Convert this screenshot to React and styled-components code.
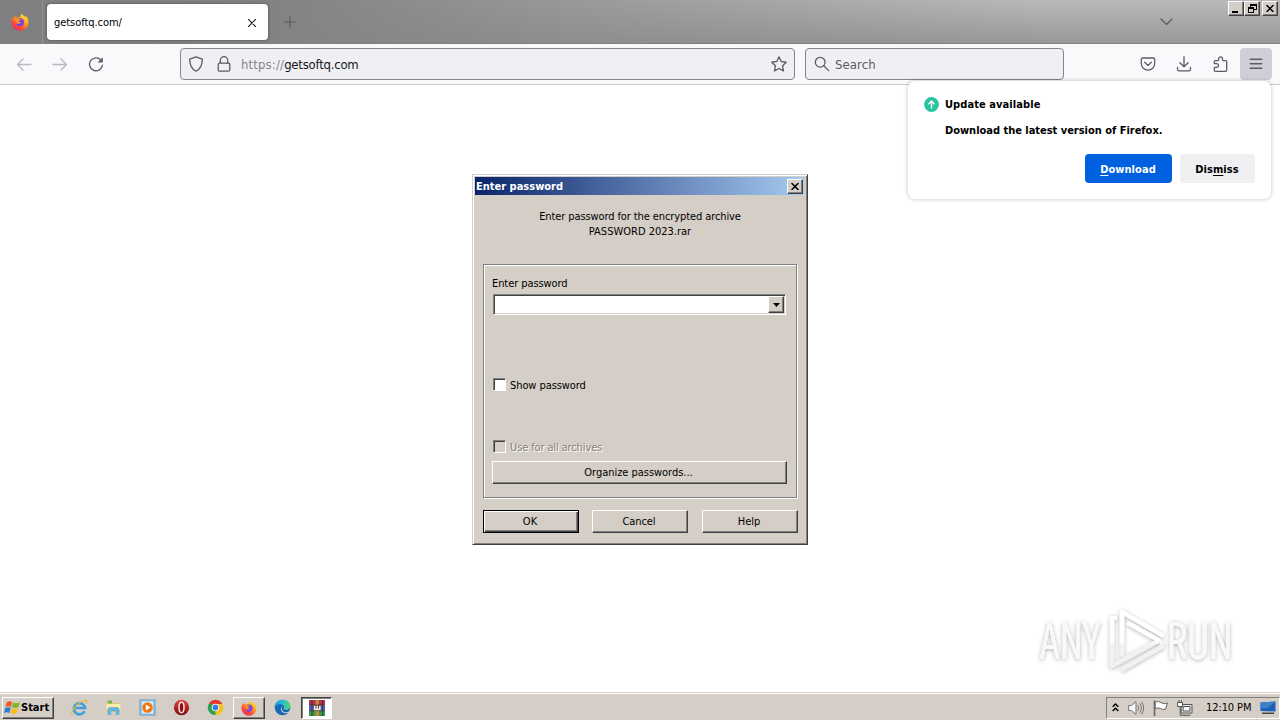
import React from "react";
import styled, { createGlobalStyle, css } from "styled-components";

const Global = createGlobalStyle`
  * { box-sizing: border-box; }
  html, body { margin: 0; padding: 0; background: #fff; overflow: hidden; }
  body { font-family: "DejaVu Sans Condensed", "DejaVu Sans", sans-serif; font-stretch: condensed; font-size: 11px; color: #000; }
`;

const Screen = styled.div`
  position: relative;
  width: 1280px;
  height: 720px;
  display: flex;
  flex-direction: column;
  overflow: hidden;
`;

const Text = styled.span`
  font-size: ${(p) => p.$size || 11}px;
  font-weight: ${(p) => (p.$bold ? 700 : 400)};
  letter-spacing: ${(p) => p.$track || 0}px;
  color: ${(p) => p.$color || "#000"};
  text-shadow: ${(p) => (p.$etched ? "1px 1px 0 #fff" : "none")};
  line-height: 15px;
  white-space: nowrap;
`;

/* ---------- browser ---------- */
const TabStrip = styled.header`
  height: 44px;
  flex: none;
  display: flex;
  align-items: flex-start;
  background: linear-gradient(90deg, #7f7f7f 0%, #838383 22%, rgba(136, 136, 136, 0.65) 45%, rgba(150, 150, 150, 0) 82%),
    linear-gradient(180deg, #bababa, #989898);
  border-bottom: 1px solid #808080;
`;
const ViewButton = styled.div`
  width: 43px;
  height: 43px;
  display: flex;
  align-items: center;
  padding-left: 11px;
  border-right: 1px solid #929292;
`;
const Tab = styled.div`
  width: 221px;
  height: 36px;
  margin: 4px 0 0 4px;
  padding: 1px 12px 0 7px;
  display: flex;
  align-items: center;
  justify-content: space-between;
  background: #fff;
  border-radius: 4px;
  box-shadow: 0 0 3px rgba(0, 0, 0, 0.45);
`;
const StripIcon = styled.div`
  margin: ${(p) => p.$m};
  display: flex;
`;
const WindowButtons = styled.div`
  display: flex;
  margin: 1px 2px 0 auto;
`;
const raised = css`
  border: 1px solid;
  border-color: #fff #404040 #404040 #fff;
  box-shadow: inset -1px -1px 0 #808080;
  background: #d5cec7;
`;
const SmallButton = styled.div`
  ${raised}
  width: 16px;
  height: 15px;
  margin-left: ${(p) => p.$gap || 0}px;
  display: flex;
  align-items: center;
  justify-content: center;
`;
const Toolbar = styled.nav`
  height: 41px;
  flex: none;
  display: flex;
  align-items: center;
  background: #f9f9fb;
  border-bottom: 1px solid #cccccf;
`;
const ToolIcon = styled.div`
  width: ${(p) => p.$w || 32}px;
  height: 32px;
  margin-left: ${(p) => p.$gap || 0}px;
  display: flex;
  align-items: center;
  justify-content: center;
  border-radius: 4px;
  background: ${(p) => (p.$active ? "#cfcfd8" : "transparent")};
`;
const Field = styled.div`
  width: ${(p) => p.$w}px;
  height: 32px;
  margin-left: ${(p) => p.$gap}px;
  padding: ${(p) => p.$pad};
  display: flex;
  align-items: center;
  background: #f0f0f4;
  border: 1px solid #85858c;
  border-radius: 4px;
`;
const Spacer = styled.div`
  flex: 1;
`;
const Page = styled.main`
  flex: 1;
  background: #fff;
`;

/* ---------- update popup ---------- */
const Popup = styled.aside`
  position: absolute;
  left: 908px;
  top: 81px;
  width: 363px;
  height: 118px;
  padding: 16px 16px 0 16px;
  background: #fff;
  border-radius: 7px;
  box-shadow: 0 0 4px rgba(0, 0, 0, 0.25);
`;
const PopupRow = styled.div`
  display: flex;
  align-items: center;
  height: 15px;
  gap: 6px;
`;
const PopupBody = styled.div`
  display: flex;
  padding-left: 21px;
  margin-top: 11px;
`;
const PopupActions = styled.div`
  display: flex;
  justify-content: flex-end;
  gap: 8px;
  margin-top: 16px;
`;
const ActionButton = styled.div`
  width: ${(p) => p.$w}px;
  height: 29px;
  padding: 1px 1px 0 0;
  display: flex;
  align-items: center;
  justify-content: center;
  border-radius: 4px;
  background: ${(p) => (p.$primary ? "#0061e0" : "#efeff2")};
`;
const Key = styled.span`
  text-decoration: underline;
  text-underline-offset: 2px;
`;

/* ---------- dialog ---------- */
const Dialog = styled.section`
  position: absolute;
  left: 472px;
  top: 174px;
  width: 336px;
  height: 371px;
  padding: 2px 3px 0;
  background: #d5cec7;
  border: 1px solid;
  border-color: #d5cec7 #404040 #404040 #d5cec7;
  box-shadow: inset 1px 1px 0 #fff, inset -1px -1px 0 #808080;
  display: flex;
  flex-direction: column;
`;
const TitleBar = styled.div`
  height: 18px;
  margin-left: -1px;
  padding: 0 1px 0 1px;
  display: flex;
  align-items: center;
  justify-content: space-between;
  background: linear-gradient(90deg, #0a246a, #a6caf0);
`;
const Message = styled.div`
  margin-top: 14px;
  height: 55px;
  display: flex;
  flex-direction: column;
  align-items: center;
`;
const Group = styled.div`
  width: 314px;
  height: 234px;
  margin-left: 7px;
  padding: 11px 9px 0 8px;
  display: flex;
  flex-direction: column;
  border: 1px solid #808080;
  box-shadow: 1px 1px 0 #fff, inset 1px 1px 0 #fff;
`;
const Combo = styled.div`
  width: 293px;
  height: 21px;
  margin: 3px 0 0 1px;
  padding: 1px;
  display: flex;
  justify-content: flex-end;
  background: #fff;
  border: 1px solid;
  border-color: #808080 #fff #fff #808080;
  box-shadow: inset 1px 1px 0 #404040, inset -1px -1px 0 #d5cec7;
`;
const ComboArrow = styled.div`
  ${raised}
  width: 16px;
  height: 17px;
  display: flex;
  align-items: center;
  justify-content: center;
`;
const CheckRow = styled.div`
  display: flex;
  align-items: center;
  height: 15px;
  margin-top: ${(p) => p.$top}px;
  gap: 4px;
`;
const Box = styled.div`
  width: 13px;
  height: 13px;
  margin: 0 0 2px 1px;
  background: ${(p) => (p.$off ? "#d5cec7" : "#fff")};
  border: 1px solid;
  border-color: #808080 #fff #fff #808080;
  box-shadow: inset 1px 1px 0 #404040;
`;
const Button = styled.div`
  ${raised}
  width: ${(p) => p.$w}px;
  height: 23px;
  margin-top: ${(p) => p.$top || 0}px;
  padding-right: 2px;
  display: flex;
  align-items: center;
  justify-content: center;
  flex: none;
  ${(p) =>
    p.$default &&
    css`
      border-color: #000;
      box-shadow: inset 1px 1px 0 #fff, inset -1px -1px 0 #404040, inset -2px -2px 0 #808080;
    `}
`;
const ButtonRow = styled.div`
  display: grid;
  grid-template-columns: 109px 110px 96px;
  margin: 12px 0 0 7px;
`;
const Watermark = styled.svg`
  position: absolute;
  left: 1028px;
  top: 602px;
`;

/* ---------- taskbar ---------- */
const TaskBar = styled.footer`
  height: 28px;
  flex: none;
  display: flex;
  align-items: center;
  padding: 3px 0 1px 2px;
  background: #d5cec7;
  border-top: 1px solid #d5cec7;
  box-shadow: inset 0 1px 0 #fff;
`;
const StartButton = styled.div`
  ${raised}
  width: 52px;
  height: 22px;
  padding-left: 1px;
  display: flex;
  align-items: center;
  gap: 0;
`;
const Launchers = styled.div`
  display: flex;
  align-items: center;
  margin-left: 8px;
`;
const Task = styled.div`
  width: 34px;
  height: 22px;
  display: flex;
  align-items: center;
  justify-content: center;
  ${(p) => p.$raised && raised}
  ${(p) => p.$raised && "width: 32px; margin-left: 1px;"}
  ${(p) =>
    p.$pressed &&
    css`
      width: 31px;
      margin-left: 2px;
      background: #fff;
      border: 1px solid;
      border-color: #404040 #fff #fff #404040;
      box-shadow: inset 1px 1px 0 #808080;
    `}
`;
const Tray = styled.div`
  width: 174px;
  height: 22px;
  margin-left: auto;
  padding: 0 3px 0 4px;
  display: flex;
  align-items: center;
  border: 1px solid;
  border-color: #808080 #fff #fff #808080;
`;
const TrayItem = styled.div`
  display: flex;
  margin-left: ${(p) => p.$gap}px;
`;

const Line = ({ w = 16, h = 16, vb = "0 0 16 16", color = "#5b5b66", sw = 1.3, children, ...rest }) => (
  <svg width={w} height={h} viewBox={vb} fill="none" stroke={color} strokeWidth={sw} strokeLinecap="round" strokeLinejoin="round" {...rest}>
    {children}
  </svg>
);

const Firefox = ({ s = 18 }) => (
  <svg width={s} height={s} viewBox="0 0 18 18">
    <defs>
      <linearGradient id="fx" x1="0.85" y1="0.05" x2="0.2" y2="1">
        <stop offset="0" stopColor="#fff044" />
        <stop offset="0.35" stopColor="#ffa41c" />
        <stop offset="0.7" stopColor="#ff4b3a" />
        <stop offset="1" stopColor="#e9206b" />
      </linearGradient>
    </defs>
    <path d="M11 .5c.3 1.600 2 2.200 3.200 3.600.3-.4.300-1 .2-1.400 2 1.600 3.100 4 3.100 6.600A8.500 8.500 0 0 1 .5 9.300c0-2.300.8-4.300 2-5.700l.4 1.300c.6-.8 1.400-1.500 2.300-1.900 0 .7.100 1.300.5 1.800C7 4.400 9.300 3.900 9.800 3.200 9.800 2.200 10.200 1 11 .5Z" fill="url(#fx)" />
    <circle cx="9" cy="9.200" r="4" fill="#7542e5" />
    <path d="M3.600 6.200C5 5 7 5.200 8.300 6.100l2 .3c-.5 1-1.700 1-2.200 1.400-.4.600.2 2 2.200 1.800-1 1.600-3.800 1.700-5 .3-.8-1-.9-2.300-1.700-3.700Z" fill="#ff8b25" />
  </svg>
);

const Close = ({ s = 8, sw = 1.5 }) => (
  <svg width={s} height={s - 1} viewBox="0 0 8 7" stroke="#000" strokeWidth={sw}>
    <path d="M.5 0l7 7M7.500 0l-7 7" />
  </svg>
);

const Flag = () => (
  <svg width="17" height="17" viewBox="0 0 17 17">
    <path d="M2.800 3.200c2-1.400 4-1.200 5.500-.2L7 8C5.500 7 3.500 7 1.400 8Z" fill="#ee5a2a" />
    <path d="M9.200 3.400c2 1.100 4.300.9 6.800-.5L14.500 8c-2.400 1.200-4.400 1.400-6.500.2Z" fill="#7ab82a" />
    <path d="M1.200 9c2-1.200 4-1 5.600-.1L5.400 14C4 13 2 13 0 14Z" fill="#2a80d0" />
    <path d="M7.700 9.300c2 1 4.200.8 6.500-.3L12.700 14c-2.400 1.200-4.500 1.200-6.400.2Z" fill="#fcbc1e" />
  </svg>
);

const IE = () => (
  <svg width="17" height="17" viewBox="0 0 17 17" fill="none">
    <path d="M13.600 12.200A5.600 5.600 0 1 1 14.100 9H4.500" stroke="#3b9fdc" strokeWidth="2.600" />
    <path d="M2.300 15.600C.4 16.200-.1 14 2.300 10.300 5.300 5.500 11.800.6 14.800 1.400c1.300.4 1.200 1.900.5 3.300" stroke="#e8b93c" strokeWidth="1.200" />
  </svg>
);
const Explorer = () => (
  <svg width="17" height="17" viewBox="0 0 17 17">
    <path d="M1.500 2.500h5l1 1.500h7v9h-13z" fill="#e4c865" />
    <path d="M3 1.500h4v3H3z" fill="#6fb554" />
    <path d="M1.500 5h14v6h-14z" fill="#fbedac" />
    <path d="M3 15.500V10.300q0-1.700 1.700-1.700h7.600q1.700 0 1.700 1.700v5.200h-2.800v-3.600H5.800v3.600z" fill="#67b7e0" stroke="#459ac8" strokeWidth=".5" />
  </svg>
);
const MediaPlayer = () => (
  <svg width="17" height="17" viewBox="0 0 17 17">
    <rect x="1" y="1" width="15" height="15" fill="#9ccbea" stroke="#5f9cc8" />
    <rect x="3" y="2.500" width="11" height="12" fill="#d7edf8" />
    <circle cx="8.500" cy="8.500" r="5.300" fill="#f17a12" />
    <path d="M6.900 5.600l4.500 2.900-4.500 2.900z" fill="#fff" />
  </svg>
);
const Opera = () => (
  <svg width="17" height="17" viewBox="0 0 17 17">
    <defs>
      <linearGradient id="op" x2="0" y2="1">
        <stop stopColor="#e0443e" />
        <stop offset="1" stopColor="#7d0b0f" />
      </linearGradient>
    </defs>
    <circle cx="8.500" cy="8.500" r="7.700" fill="url(#op)" />
    <ellipse cx="8.500" cy="8.500" rx="2.500" ry="5.200" fill="#8c1212" stroke="#f5e4e2" strokeWidth="1.500" />
  </svg>
);
const Chrome = () => (
  <svg width="17" height="17" viewBox="0 0 17 17">
    <path d="M8.500 8.500 1.830 4.650A7.700 7.700 0 0 1 15.170 4.650Z" fill="#e33b2e" />
    <path d="M8.500 8.500 15.170 4.650A7.700 7.700 0 0 1 8.500 16.200Z" fill="#fbc116" />
    <path d="M8.500 8.500 8.500 16.200A7.700 7.700 0 0 1 1.830 4.650Z" fill="#2da04b" />
    <path d="M8.500 5h6.800l-3.600 5.500z" fill="#fbc116" />
    <path d="M5.500 10.300 1.830 4.650 7 5.500z" fill="#2da04b" />
    <circle cx="8.500" cy="8.500" r="3.800" fill="#fff" />
    <circle cx="8.500" cy="8.500" r="2.900" fill="#3a7be8" />
  </svg>
);
const Edge = () => (
  <svg width="17" height="17" viewBox="0 0 17 17">
    <defs>
      <linearGradient id="ed" x1="0" x2="1">
        <stop stopColor="#1f9de0" />
        <stop offset="0.6" stopColor="#2cc3c4" />
        <stop offset="1" stopColor="#5fd650" />
      </linearGradient>
    </defs>
    <circle cx="8.500" cy="8.500" r="7.800" fill="#1768b8" />
    <path d="M.7 8C1 3.500 4.500.7 8.600.7c4.600 0 7.700 3 7.700 6.300 0 2.500-1.800 4-4.200 4-2 0-2.800-.8-2.300-1.500C11 7.500 8.500 5.300 6 5.300 3.500 5.300 1.500 6.500.7 8Z" fill="url(#ed)" />
    <path d="M9.600 7.600c-1.700.3-2.300 2.600-.8 4.300 1.700 1.800 4.400 1.600 6.500.3l1.500-2-.2 3-1.300.2C12 15 7.200 14 7 10.800c0-1.700 1-3.300 2.600-3.200Z" fill="#d5cec7" />
  </svg>
);
const WinRar = () => (
  <svg width="18" height="18" viewBox="0 0 18 18">
    <path d="M1 1h16v5H1z" fill="#b03048" />
    <path d="M1 6.500h16v5H1z" fill="#4460c0" />
    <path d="M1 12h16v5H1z" fill="#35984a" />
    <path d="M4 1v16M14.500 1v16" stroke="#32223a" strokeWidth=".7" />
    <path d="M1 6.200h16M1 11.700h16" stroke="#231d2c" strokeWidth=".8" />
    <path d="M7.500 1h3.500v16H7.500z" fill="#c4863a" />
    <path d="M5.500 6.500h7.500v5H5.500z" fill="#e9e5e0" stroke="#444" strokeWidth=".6" />
    <path d="M8 5v4.500M10.500 5v4.500" stroke="#5c4030" strokeWidth="1" />
  </svg>
);

export default function App() {
  return (
    <Screen>
      <Global />
      <TabStrip>
        <ViewButton><Firefox /></ViewButton>
        <Tab>
          <Text $track={-0.05}>getsoftq.com/</Text>
          <Line w={8} h={8} vb="0 0 8 8" color="#222" sw={1.2}><path d="M.2.200l7.600 7.600M7.800.2.200 7.800" /></Line>
        </Tab>
        <StripIcon $m="16px 0 0 16px">
          <Line w={12} h={12} vb="0 0 12 12" color="#5a5a5a" sw={1.1}><path d="M6 .5v11M.5 6h11" /></Line>
        </StripIcon>
        <StripIcon $m="18px 0 0 864px">
          <Line w={13} h={8} vb="0 0 13 8" color="#5a5a5a" sw={1.2}><path d="M1 1l5.500 5.500L12 1" /></Line>
        </StripIcon>
        <WindowButtons>
          <SmallButton>
            <svg width="8" height="8" viewBox="0 0 8 8"><path d="M0 6h6v2H0z" /></svg>
          </SmallButton>
          <SmallButton>
            <svg width="9" height="9" viewBox="0 0 9 9" fill="none" stroke="#000" shapeRendering="crispEdges">
              <path d="M2.500 3V.5h6v5H6M2 1.500h7M.5 3.500h5v5h-5zM0 4.500h6" />
            </svg>
          </SmallButton>
          <SmallButton $gap={2}><Close /></SmallButton>
        </WindowButtons>
      </TabStrip>

      <Toolbar>
        <ToolIcon $gap={8}>
          <Line color="#b9b9bf" w={16}><path d="M15 8.500H1.500M7 3 1.500 8.500 7 14" /></Line>
        </ToolIcon>
        <ToolIcon $gap={4}>
          <Line color="#b9b9bf" w={16}><path d="M1 8.500h13.500M9 3 14.500 8.500 9 14" /></Line>
        </ToolIcon>
        <ToolIcon $gap={4}>
          <Line><path d="M12.900 4A6.500 6.500 0 1 0 14.500 9.200" /><path d="M14.800 1.200v5.300H9.500z" fill="#5b5b66" stroke="none" /></Line>
        </ToolIcon>
        <Field $w={615} $gap={68} $pad="0 7px 0 7px">
          <Line><path d="M8 .9 14.300 3.200C14.400 8.500 12.700 12.700 8 15.200 3.300 12.700 1.600 8.500 1.700 3.200Z" /></Line>
          <StripIcon $m="0 9px 0 12px">
            <Line><rect x="2.200" y="7.200" width="11.600" height="8" rx="1.500" /><path d="M4.300 7V4.400a3.700 3.700 0 0 1 7.400 0V7" /></Line>
          </StripIcon>
          <Text $size={13} $track={0.15} $color="#85858c">https://</Text>
          <Text $size={13} $track={-0.22} $color="#15141a">getsoftq.com</Text>
          <Spacer />
          <Line><path d="M8 .9 10.200 5.500 15.200 6.200 11.600 9.800 12.500 14.900 8 12.500 3.500 14.900 4.400 9.800.8 6.200 5.800 5.500Z" /></Line>
        </Field>
        <Field $w={259} $gap={10} $pad="0 8px">
          <Line><circle cx="6.200" cy="6.200" r="4.900" /><path d="M9.800 9.800 14.600 14.600" /></Line>
          <StripIcon $m="0 0 0 5px"><Text $size={13} $track={0.1} $color="#5b5b66">Search</Text></StripIcon>
        </Field>
        <Spacer />
        <ToolIcon>
          <Line><path d="M2.800 2h10.400q1.500 0 1.500 1.500V7.500a6.700 6.700 0 0 1-13.400 0V3.500Q1.300 2 2.800 2ZM4.700 6.300 8 9.500l3.300-3.200" /></Line>
        </ToolIcon>
        <ToolIcon $gap={4}>
          <Line><path d="M8 .7v10M3.900 6.800 8 10.900l4.100-4.100M1.500 11.500v1.700q0 1.700 1.700 1.700h9.600q1.700 0 1.700-1.700v-1.700" /></Line>
        </ToolIcon>
        <ToolIcon $gap={4}>
          <Line><path d="M2.300 6.800V5.600q0-1 1-1H5.900q.8 0 .8-.8V2.800a1.900 1.900 0 0 1 3.800 0v1q0 .8.800.8h2.400q1 0 1 1v8.700q0 1-1 1H3.300q-1 0-1-1v-2.300q0-.7.700-.7h1.600a1.800 1.800 0 0 0 0-3.700H2.300Z" /></Line>
        </ToolIcon>
        <ToolIcon $gap={4} $active>
          <Line sw={1.400}><path d="M2.200 3.200h11.600M2.200 7.700h11.600M2.200 12.200h11.600" /></Line>
        </ToolIcon>
        <StripIcon $m="0 8px 0 0" />
      </Toolbar>

      <Page />

      <TaskBar>
        <StartButton>
          <Flag />
          <Text $bold>Start</Text>
        </StartButton>
        <Launchers>
          <Task><IE /></Task>
          <Task><Explorer /></Task>
          <Task><MediaPlayer /></Task>
          <Task><Opera /></Task>
          <Task><Chrome /></Task>
          <Task $raised><Firefox s={16} /></Task>
          <Task><Edge /></Task>
          <Task $pressed><WinRar /></Task>
        </Launchers>
        <Tray>
          <TrayItem $gap={1}>
            <svg width="7" height="9" viewBox="0 0 7 9" fill="none" stroke="#000" strokeWidth="1.400"><path d="M.7 3.700 3.500 1l2.800 2.700M.7 8 3.500 5.300 6.300 8" /></svg>
          </TrayItem>
          <TrayItem $gap={9}>
            <Line color="#777" sw={1}><path d="M1 5.500h2.500L8 1.500v13l-4.500-4H1z" fill="#f5f5f5" /><path d="M10 5.500q1.500 2.500 0 5M12 3.500q3 4.500 0 9M14 2q3.500 6 0 12" /></Line>
          </TrayItem>
          <TrayItem $gap={9}>
            <Line color="#666" sw={1}><path d="M1.500 1v14.500" strokeWidth="1.600" /><path d="M2.500 2q3-1.500 5.500.6 3 2 6.500.4l-2 6.200q-2.500.9-5-.7-2.500-1.300-5 0z" fill="#fff" /></Line>
          </TrayItem>
          <TrayItem $gap={8}>
            <Line color="#555" sw={1}><path d="M4.500 4.500h10.500v8.500H4.500z" fill="#e6e6e6" /><path d="M6.500 6.500h6.500v4.500H6.500z" fill="#fafafa" /><path d="M7 15.300h6" /><path d="M1 2.500h4.500v4H1zM2 .5v2M4.500.5v2" fill="#fff" /><path d="M3.200 6.500v8.800H7" /></Line>
          </TrayItem>
          <TrayItem $gap={13}><Text $track={-0.1}>12:10 PM</Text></TrayItem>
          <TrayItem $gap={9}>
            <svg width="16" height="15" viewBox="0 0 16 15"><path d="M.5 2.500 15.500 1.500v10L.5 11z" fill="#1b5fb8" /><path d="M.5 2.500 15.500 1.500 7 8.500.5 8z" fill="#4080c8" /><path d="M2 12.500h12v1.500H2z" fill="#444" /></svg>
          </TrayItem>
        </Tray>
      </TaskBar>

      <Popup>
        <PopupRow>
          <svg width="15" height="15" viewBox="0 0 15 15"><circle cx="7.500" cy="7.500" r="7.400" fill="#2ac3a2" /><path d="M7.500 11.500v-7M4.400 7.200 7.500 4.100l3.100 3.100" fill="none" stroke="#fff" strokeWidth="1.400" /></svg>
          <Text $bold $track={0.08}>Update available</Text>
        </PopupRow>
        <PopupBody><Text $bold $track={-0.02}>Download the latest version of Firefox.</Text></PopupBody>
        <PopupActions>
          <ActionButton $w={87} $primary><Text $bold $color="#fff" $track={0.05}><Key>D</Key>ownload</Text></ActionButton>
          <ActionButton $w={75}><Text $bold $track={0.05}>Dis<Key>m</Key>iss</Text></ActionButton>
        </PopupActions>
      </Popup>

      <Dialog>
        <TitleBar>
          <Text $bold $color="#fff" $track={0}>Enter password</Text>
          <SmallButton><Close /></SmallButton>
        </TitleBar>
        <Message>
          <Text $track={-0.1}>Enter password for the encrypted archive</Text>
          <Text>PASSWORD 2023.rar</Text>
        </Message>
        <Group>
          <Text $track={-0.08}>Enter password</Text>
          <Combo>
            <ComboArrow><svg width="7" height="4" viewBox="0 0 7 4"><path d="M0 0h7L3.500 4z" /></svg></ComboArrow>
          </Combo>
          <CheckRow $top={63}><Box /><Text $track={-0.08}>Show password</Text></CheckRow>
          <CheckRow $top={47}><Box $off /><Text $track={-0.12} $color="#868178" $etched>Use for all archives</Text></CheckRow>
          <Button $w={295} $top={6}><Text $track={-0.03}>Organize passwords...</Text></Button>
        </Group>
        <ButtonRow>
          <Button $w={96} $default><Text>OK</Text></Button>
          <Button $w={96}><Text $track={-0.1}>Cancel</Text></Button>
          <Button $w={96}><Text>Help</Text></Button>
        </ButtonRow>
      </Dialog>

      <Watermark width="220" height="80" viewBox="0 0 220 80">
        <defs>
          <filter id="soft" x="-10%" y="-20%" width="120%" height="140%">
            <feDropShadow dx="0" dy="1" stdDeviation="2" floodColor="#000" floodOpacity="0.32" />
          </filter>
          <linearGradient id="fade" gradientUnits="userSpaceOnUse" x1="0" y1="8" x2="0" y2="70">
            <stop offset="0.5" stopColor="#fff" />
            <stop offset="0.56" stopColor="#f1f1f1" />
          </linearGradient>
        </defs>
        <g filter="url(#soft)">
          <g fill="#f9f9f9" fontFamily="Roboto, sans-serif" fontSize="51">
            <text transform="translate(11 57) scale(.715 1)">ANY</text>
            <text transform="translate(139 57) scale(.75 1)">RUN</text>
          </g>
          <g fill="none" stroke="url(#fade)" strokeWidth="4.200" strokeLinejoin="round" strokeLinecap="round">
            <path d="M94 53V10L134 33" />
            <path d="M101 21.500 131 38.500 84 64V16h3" />
            <path d="M95 67 134 44.500V41" />
          </g>
        </g>
      </Watermark>
    </Screen>
  );
}
